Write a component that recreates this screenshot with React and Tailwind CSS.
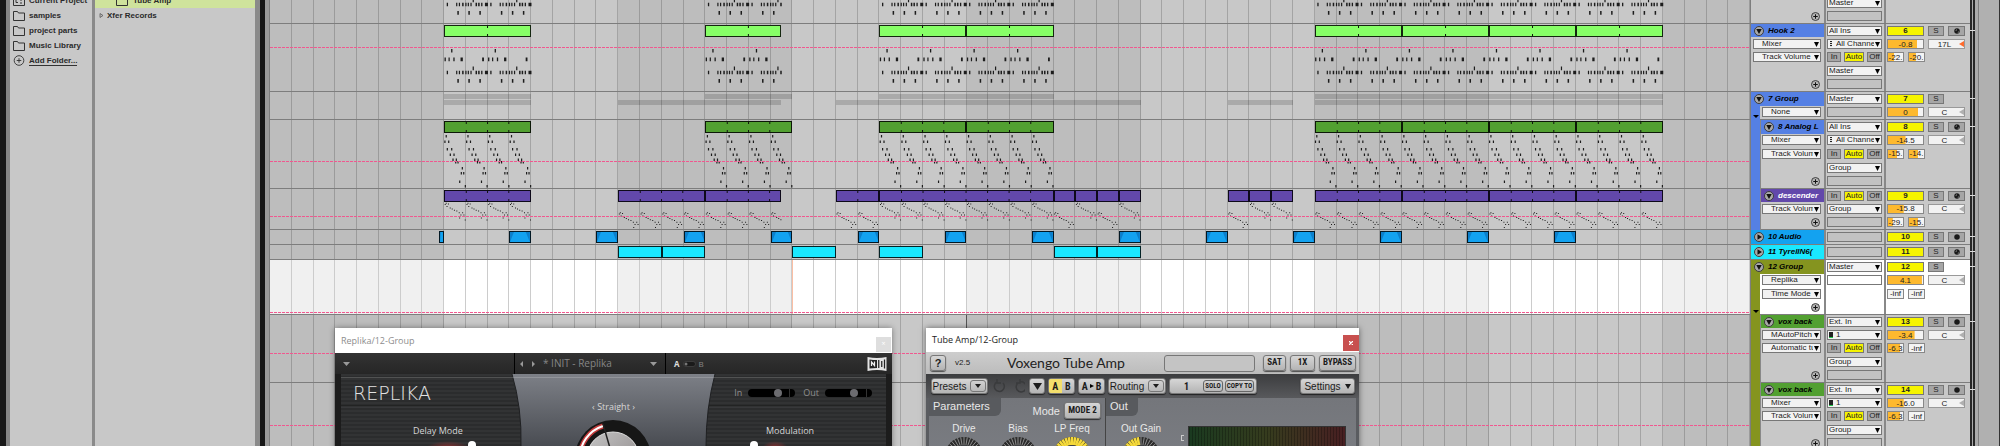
import React from 'react';

/* ---------- arrangement data (positions in bars, bar 0 = first clip) ---------- */
const FIRST_BAR = -8;
const BARS = 68;
const BAR_W = 21.75;
const hookClips = [[0, 4], [12, 15.5], [20, 24], [24, 28], [40, 44], [44, 48], [48, 52], [52, 56]];
const analogClips = [[0, 4], [12, 16], [20, 24], [24, 28], [40, 44], [44, 48], [48, 52], [52, 56]];
const descClips = [[0, 4], [8, 12], [12, 15.5], [18, 20], [20, 28], [28, 29], [29, 30], [30, 31], [31, 32], [36, 37], [37, 38], [38, 39], [40, 44], [44, 48], [48, 52], [52, 56]];
const audioClips = [[-0.25, 0], [3, 4], [7, 8], [11, 12], [15, 16], [19, 20], [23, 24], [27, 28], [31, 32], [35, 36], [39, 40], [43, 44], [47, 48], [51, 52]];
const tyrellClips = [[8, 10], [10, 12], [16, 18], [20, 22], [28, 30], [30, 32]];

/* note patterns: [x, y, w, h] inside one loop */
const hookNotes = [
  [7, 25, 1.3],
  [0.4, 33.5, 1.3], [4.4, 33.5, 1.2], [9.2, 33.5, 1.3], [16.4, 33.5, 2.3], [38, 33.5, 1.8],
  [28.5, 42.5, 1.2],
  [2.6, 46.6, 1.3], [12, 46.6, 1.2], [14.7, 46.6, 1.2], [18, 46.6, 1.5], [21.2, 46.6, 1.2], [23.6, 46.6, 1.2], [26.3, 46.6, 1.2],
  [31.4, 46.6, 1.5], [34, 46.6, 1.5], [37, 46.6, 1.3], [40.8, 46.6, 3],
  [13.2, 55, 1.5], [24.2, 55, 1.5], [35.2, 55, 1.5],
].map(([x, y, w]) => [x, y, w, 3.6]);
const analogNotes = [
  [1.5, 15], [0.2, 20.5], [4, 20.5], [2.6, 28], [7, 28], [5.6, 33.5], [9.3, 33.5], [8.3, 38.5], [11.6, 38.5],
  [11, 41], [13.3, 41], [17.6, 47], [16.6, 52], [19, 52], [15, 60.5], [20.6, 65],
].map(([x, y]) => [x, y, 1.2, 2.4]);
const descNotes = [
  [0.6, 15], [1.6, 13.8], [3.8, 14.6], [5.6, 18.5], [7.6, 19.6], [2.4, 17], [9.8, 20.8], [12.2, 21.6], [14.6, 23.3], [16.3, 25.5],
  [18, 23.3], [19.3, 25.5], [15, 28.5], [20.6, 30.5],
].map(([x, y]) => [x, y, 1, 1]);

const isHigh = (b) => b < 4 || (b >= 20 && b < 28) || [29, 31, 37, 38].includes(b);

function buildNotes(clips, pattern, loopBars, shift) {
  const out = [];
  clips.forEach(([s, e]) => {
    for (let b = s; b < e; b += loopBars) {
      pattern.forEach(([x, y, w, h]) => {
        const px = (b - FIRST_BAR) * BAR_W + x;
        if (px < (e - FIRST_BAR) * BAR_W - 0.5) out.push([px, y + (shift ? shift(b) : 0), w, h]);
      });
    }
  });
  return out;
}
const hookSet = buildNotes(hookClips, hookNotes, 2);
const analogSet = buildNotes(analogClips, analogNotes, 1);
const descSet = buildNotes(descClips, descNotes, 1, (b) => (isHigh(b) ? 0 : 9.5));

/* ---------- tracks ---------- */
const TRACKS = [
  { id: 5, h: 'h-[68px]', rows: 'grid-rows-5', color: 'bg-[#5580e4]', name: '', chain: [], addRow: 5, io: [null, null, null, 'Master', ''], mix: null, clips: [], notes: hookSet },
  { id: 6, h: 'h-[68px]', rows: 'grid-rows-5', color: 'bg-[#5580e4]', name: 'Hook 2', chain: ['Mixer', 'Track Volume'], addRow: 5, io: ['All Ins', ':All Channels', '#', 'Master', ''], mix: { vol: '-0.8', fill: 83, pan: '17L', off: true, rec: 'midi', peaks: [['-22.', 40], ['-20.', 46]] }, clips: hookClips, clip: 'bg-[#87ff67]', tick: 2, notes: hookSet, auto: 34 },
  { id: 7, h: 'h-[28px]', rows: 'grid-rows-2', color: 'bg-[#5580e4]', name: '7 Group', group: 'bg-[#5580e4]', head: true, chain: ['None'], io: ['Master', ''], mix: { vol: '0', fill: 86, pan: 'C' }, summary: true },
  { id: 8, h: 'h-[69px]', rows: 'grid-rows-5', color: 'bg-[#5580e4]', name: '8 Analog L', group: 'bg-[#5580e4]', chain: ['Mixer', 'Track Volume'], addRow: 5, io: ['All Ins', ':All Channels', '#', 'Group', ''], mix: { vol: '-14.5', fill: 50, pan: 'C', rec: 'midi', peaks: [['-15.', 60], ['-14.', 62]] }, clips: analogClips, clip: 'bg-[#52a031]', tick: 1, notes: analogSet, auto: 60 },
  { id: 9, h: 'h-[41px]', rows: 'grid-rows-3', color: 'bg-[#6248ab]', light: true, name: 'descender', group: 'bg-[#5580e4]', chain: ['Track Volume'], addRow: 3, io: ['#', 'Group', ''], mix: { vol: '-15.8', fill: 45, pan: 'C', rec: 'midi', peaks: [['-29.', 32], ['-15.', 60]] }, clips: descClips, clip: 'bg-[#6248ab]', tick: 1, notes: descSet, auto: 67 },
  { id: 10, h: 'h-[15px]', rows: 'grid-rows-1', color: 'bg-[#13a2f0]', name: '10 Audio', folded: true, chain: [], io: [''], mix: { rec: 'audio' }, clips: audioClips, clip: 'bg-[#13a2f0]', fades: true },
  { id: 11, h: 'h-[15px]', rows: 'grid-rows-1', color: 'bg-[#1ae8ff]', name: '11 TyrellN6(', folded: true, chain: [], io: [''], mix: { rec: 'midi' }, clips: tyrellClips, clip: 'bg-[#1ae8ff]' },
  { id: 12, h: 'h-[55px]', rows: 'grid-rows-4', color: 'bg-[#85941f]', name: '12 Group', group: 'bg-[#85941f]', head: true, selected: true, chain: ['Replika', 'Time Mode'], addRow: 4, io: ['Master', ''], mix: { vol: '4.1', fill: 97, pan: 'C', peaks: [['-inf', 0], ['-inf', 0]] }, auto: 97 },
  { id: 13, h: 'h-[68px]', rows: 'grid-rows-5', color: 'bg-[#52a031]', name: 'vox back', group: 'bg-[#85941f]', chain: ['MAutoPitch', 'Automatic tuning'], addRow: 5, io: ['Ext. In', '|1', '#', 'Group', ''], mix: { vol: '-3.4', fill: 76, pan: 'C', rec: 'audio', peaks: [['-6.3', 80], ['-inf', 0]] }, auto: 56 },
  { id: 14, h: 'h-[68px]', rows: 'grid-rows-5', color: 'bg-[#52a031]', name: 'vox back', group: 'bg-[#85941f]', chain: ['Mixer', 'Track Volume'], addRow: 5, io: ['Ext. In', '|1', '#', 'Group', ''], mix: { vol: '-16.0', fill: 45, pan: 'C', rec: 'audio', peaks: [['-6.3', 80], ['-inf', 0]] }, auto: 62 },
];

const ROW_START = ['', 'row-start-1', 'row-start-2', 'row-start-3', 'row-start-4', 'row-start-5'];

/* ---------- arrangement lane ---------- */
function BarGrid({ selected }) {
  return (
    <div className="absolute inset-0 flex">
      {Array.from({ length: BARS }, (_, i) => {
        const dark = Math.floor(i / 8) % 2 === 0;
        const tone = selected ? (dark ? 'bg-[#f0f0f0]' : 'bg-white') : dark ? 'bg-[#bdbdbd]' : 'bg-[#c8c8c8]';
        return <div key={i} className={`flex-1 border-r ${selected ? 'border-[#cccccc]' : 'border-black/18'} ${tone}`} />;
      })}
    </div>
  );
}

function Clip({ span: [s, e], tone, tick, fades }) {
  const col = (b) => Math.round((b - FIRST_BAR) * 4) + 1;
  const ticks = [];
  if (tick) for (let b = tick; b < e - s; b += tick) ticks.push((b / (e - s)) * 100);
  return (
    <div className={`relative row-start-1 h-3 border border-black/85 ${tone}`} style={{ gridColumn: `${col(s)} / ${col(e)}` }}>
      <svg className="absolute inset-0 h-full w-full" viewBox="0 0 100 10" preserveAspectRatio="none" aria-hidden="true">
        {fades && <path d="M0 0H20L0 10ZM80 0H100V10Z" fill="#0c7fcb" />}
        {ticks.map((t) => (
          <path key={t} d={`M${t} 0V2M${t} 8V10`} stroke="#111" strokeWidth="1" vectorEffect="non-scaling-stroke" />
        ))}
      </svg>
    </div>
  );
}

const clipGrid = 'relative grid grid-cols-[repeat(272,minmax(0,1fr))]';

function SummaryBars({ spans }) {
  const col = (b) => Math.round((b - FIRST_BAR) * 4) + 1;
  return (
    <div className={clipGrid}>
      {spans.map(([s, e]) => (
        <div key={s} className="row-start-1 h-[5px] bg-black/15" style={{ gridColumn: `${col(s)} / ${col(e)}` }} />
      ))}
    </div>
  );
}

function Lane({ t }) {
  return (
    <div className="relative min-w-0 flex-1 overflow-hidden">
      <BarGrid selected={t.selected} />
      {t.summary && (
        <div className="flex flex-col gap-px pt-0.5">
          <SummaryBars spans={[[0, 4], [12, 16], [20, 28], [40, 56]]} />
          <SummaryBars spans={[[0, 4], [8, 15.5], [18, 32], [36, 39], [40, 56]]} />
        </div>
      )}
      {t.clips && (
        <div className={`${clipGrid} pt-px`}>
          {t.clips.map((c, i) => (
            <Clip key={i} span={c} tone={t.clip} tick={t.tick} fades={t.fades} />
          ))}
        </div>
      )}
      {t.notes && (
        <svg className="absolute inset-0 h-full w-full" viewBox="0 0 1479 68" preserveAspectRatio="xMinYMin slice" aria-hidden="true">
          <path d={t.notes.map(([x, y, w, h]) => `M${x} ${y}h${w}v${h}h-${w}z`).join('')} fill="#1c1c1c" />
        </svg>
      )}
      {t.selected && <div className="absolute inset-y-0 left-[35.3%] w-px bg-[#fbbfa4]" />}
      {t.id === 13 && <div className="absolute inset-y-0 left-[47.06%] w-px bg-[#555]" />}
      {t.auto !== undefined && (
        <div
          className="absolute inset-x-0 h-px bg-[repeating-linear-gradient(90deg,#f0588f_0_3px,transparent_3px_4px)]"
          style={{ top: `${t.auto}%` }}
        />
      )}
    </div>
  );
}

/* ---------- track header controls ---------- */
function Arrow({ className = '' }) {
  return (
    <svg viewBox="0 0 10 9" preserveAspectRatio="none" className={`pointer-events-none ${className}`} aria-hidden="true">
      <path d="M0 0H10L5 9Z" fill="currentColor" />
    </svg>
  );
}

function Picker({ value, label, indent }) {
  let text = value;
  let mark = null;
  if (value[0] === ':') {
    text = value.slice(1);
    mark = 'dots';
  } else if (value[0] === '|') {
    text = value.slice(1);
    mark = 'meter';
  }
  const pad = indent || mark === 'dots' ? 'pl-2' : mark ? 'pl-2' : 'pl-px';
  return (
    <div className="relative h-[10px] w-full border border-[#777] bg-[#f2f2f2]">
      <select aria-label={label} className={`block h-2 w-full appearance-none overflow-hidden bg-transparent text-[8px] leading-[8px] text-[#222] ${pad} pr-[7px]`}>
        <option>{text}</option>
      </select>
      {mark === 'dots' && <div className="absolute top-px left-0.5 h-1.5 w-0.5 bg-[repeating-linear-gradient(#222_0_1px,#ddd_1px_2px)]" />}
      {mark === 'meter' && <div className="absolute top-px left-px h-1.5 w-1 border-b border-[#1ecb4b] bg-[#222]" />}
      <Arrow className="absolute top-0.5 right-px h-[5px] w-[5px] text-black" />
    </div>
  );
}

function Monitor() {
  const base = 'h-[10px] border border-[#777] text-[8px] leading-[8px] text-[#222]';
  return (
    <div className="flex w-full justify-between">
      <button type="button" className={`${base} w-[14px] bg-[#a6a6a6]`}>In</button>
      <button type="button" className={`${base} w-5 bg-[#f6f400]`}>Auto</button>
      <button type="button" className={`${base} w-[15px] bg-[#a6a6a6]`}>Off</button>
    </div>
  );
}

function ValueBox({ value, fill, label, width }) {
  return (
    <input
      aria-label={label}
      defaultValue={value}
      className={`h-[10px] ${width} border border-[#888] bg-[#f4f4f4] bg-[linear-gradient(#fdb92e,#fdb92e)] bg-no-repeat p-0 text-center text-[8px] leading-[8px] text-[#222]`}
      style={{ backgroundSize: `${fill}% 100%` }}
    />
  );
}

function FoldIcon({ folded }) {
  return (
    <svg viewBox="0 0 20 20" className="h-[10px] w-[10px] shrink-0" aria-hidden="true">
      <circle cx="10" cy="10" r="9" fill="#a9a9a9" stroke="#3c3c3c" strokeWidth="2" />
      {folded ? <path d="M7 4.500L16 10L7 15.500Z" fill="#111" /> : <path d="M4.500 6H15.500L10 16Z" fill="#111" />}
    </svg>
  );
}

function RecIcon({ kind }) {
  return (
    <svg viewBox="0 0 12 12" className="h-[6px] w-[6px]" aria-hidden="true">
      <circle cx="6" cy="6" r="5.500" fill="#1a1a1a" />
      {kind === 'midi' && <path d="M2.500 5.500L5.500 2V5ZM7 9.500L9.500 6V9Z" fill="#a6a6a6" />}
    </svg>
  );
}

function AddButton() {
  return (
    <button type="button" aria-label="Add automation lane" className="mr-[3px] ml-auto block">
      <svg viewBox="0 0 18 18" className="h-[9px] w-[9px]" aria-hidden="true">
        <circle cx="9" cy="9" r="8" fill="#b4b4b4" stroke="#333" strokeWidth="1.800" />
        <path d="M9 4.500V13.500M4.500 9H13.500" stroke="#111" strokeWidth="2" />
      </svg>
    </button>
  );
}

function NameColumn({ t }) {
  const nested = t.group && !t.head;
  return (
    <div className={`flex w-[75px] shrink-0 border-r-2 border-[#888] ${t.selected ? 'bg-white' : 'bg-[#c8c8c8]'}`}>
      {nested && <div className={`-mb-px w-[10px] shrink-0 border-r border-[#888] ${t.group}`} />}
      <div className={`relative grid min-w-0 flex-1 ${t.rows}`}>
        {t.head && (
          <div className={`absolute inset-y-0 -bottom-px left-0 flex w-[9px] items-end justify-center pb-0.5 ${t.group}`}>
            <Arrow className="h-[3px] w-[6px] text-black" />
          </div>
        )}
        <div className={`relative row-start-1 flex min-w-0 items-center gap-1 overflow-hidden pl-[3px] ${t.color}`}>
          {t.name && (
            <>
              <button type="button" aria-label={`Fold ${t.name}`} className="flex">
                <FoldIcon folded={t.folded} />
              </button>
              <span className={`text-[8px] leading-[10px] font-bold whitespace-nowrap italic ${t.light ? 'text-white' : 'text-black'}`}>{t.name}</span>
            </>
          )}
        </div>
        {t.chain.map((c, i) => (
          <div key={i} className={`${ROW_START[i + 2]} flex items-center pr-[3px] ${t.head ? 'pl-[11px]' : nested ? 'pl-px' : 'pl-0.5'}`}>
            <Picker value={c} label={`${t.name} automation ${i + 1}`} indent />
          </div>
        ))}
        {t.addRow && (
          <div className={`${ROW_START[t.addRow]} flex items-center pr-px`}>
            <AddButton />
          </div>
        )}
      </div>
    </div>
  );
}

function IoColumn({ t }) {
  return (
    <div className={`grid w-[60px] shrink-0 border-r-2 border-[#888] pr-0.5 pl-px ${t.rows} ${t.selected ? 'bg-white' : 'bg-[#c8c8c8]'}`}>
      {t.io.map((v, i) => (
        <div key={i} className={`${ROW_START[i + 1]} flex min-w-0 items-center`}>
          {v === '#' ? <Monitor /> : v ? <Picker value={v} label={`Track ${t.id} routing ${i + 1}`} /> : v === '' ? <div className={`h-[10px] w-full border border-[#777] ${t.selected ? 'bg-white' : 'bg-[#c2c2c2]'}`} /> : null}
        </div>
      ))}
    </div>
  );
}

function MixColumn({ t }) {
  const m = t.mix;
  return (
    <div className={`grid min-w-0 flex-1 pl-px ${t.rows} ${t.selected ? 'bg-white' : 'bg-[#c8c8c8]'}`}>
      {m && (
        <div className="row-start-1 flex items-center gap-1">
          <button type="button" className="h-[10px] w-[37px] border border-[#777] bg-[#f6f400] text-[8px] leading-[8px] font-bold text-[#222]">{t.id}</button>
          <button type="button" className="h-[10px] w-4 border border-[#777] bg-[#a6a6a6] text-[8px] leading-[8px] text-[#222]">S</button>
          {m.rec && (
            <button type="button" aria-label={`Arm track ${t.id}`} className="flex h-[10px] w-[17px] items-center justify-center border border-[#777] bg-[#a6a6a6]">
              <RecIcon kind={m.rec} />
            </button>
          )}
        </div>
      )}
      {m && m.vol && (
        <div className="row-start-2 flex items-center gap-1">
          <ValueBox value={m.vol} fill={m.fill} label={`Track ${t.id} volume`} width="w-[37px]" />
          <div className="relative flex">
            <input aria-label={`Track ${t.id} pan`} defaultValue={m.pan} className="h-[10px] w-[37px] border border-[#999] bg-[#f2f2f2] p-0 pr-1 text-center text-[8px] leading-[8px] text-[#222]" />
            <svg viewBox="0 0 6 8" preserveAspectRatio="none" className={`absolute top-0.5 right-px h-1.5 w-[5px] ${m.off ? 'text-[#ff6a2b]' : 'text-[#b0b0b0]'}`} aria-hidden="true">
              <path d="M6 0V8L0 4Z" fill="currentColor" />
            </svg>
          </div>
        </div>
      )}
      {m && m.peaks && (
        <div className="row-start-3 flex items-center gap-1">
          {m.peaks.map(([v, f], i) => (
            <ValueBox key={i} value={v} fill={f} label={`Track ${t.id} level ${i + 1}`} width="w-[17px]" />
          ))}
        </div>
      )}
    </div>
  );
}

function Meters() {
  return (
    <div className="relative -mb-px flex w-2 shrink-0 gap-px bg-[#aaa] pr-[3px]">
      <div className="flex-1 bg-[#262626]" />
      <div className="flex-1 bg-[#262626]" />
      <div className="absolute top-1.5 right-[3px] left-0 h-px bg-[#ddd]" />
    </div>
  );
}

function Track({ t }) {
  return (
    <div className={`flex ${t.h} shrink-0 border-b border-[#7d7d7d]`}>
      <Lane t={t} />
      <div className="flex w-[229px] shrink-0 border-r border-l border-[#7d7d7d]">
        <NameColumn t={t} />
        <IoColumn t={t} />
        <MixColumn t={t} />
        <Meters />
      </div>
    </div>
  );
}

/* ---------- browser ---------- */
function FolderIcon() {
  return (
    <svg viewBox="0 0 24 20" className="h-[10px] w-3" fill="none" stroke="#333" strokeWidth="2" aria-hidden="true">
      <path d="M1 19V1H9L11 4H23V19Z" />
    </svg>
  );
}

function Browser() {
  const item = 'flex h-[15px] items-center gap-1 pl-[3px] whitespace-nowrap';
  return (
    <div className="flex w-[270px] shrink-0 border-r border-[#808080] text-[8px] font-bold text-[#2a2a2a]">
      <div className="w-1.5 bg-[#181818]" />
      <div className="w-1 bg-[#868686]" />
      <nav aria-label="Places" className="-mt-[7px] flex w-[82px] flex-col bg-[#c8c8c8]">
        <a href="#current" className={item}>
          <svg viewBox="0 0 24 20" className="h-[10px] w-3" fill="none" stroke="#333" strokeWidth="2" aria-hidden="true">
            <path d="M1 1H23V19H1ZM6 7V13H10M14 8H18M14 14H18" />
          </svg>
          Current Project
        </a>
        {['samples', 'project parts', 'Music Library'].map((f) => (
          <a key={f} href="#folder" className={item}><FolderIcon />{f}</a>
        ))}
        <a href="#add" className={item}>
          <svg viewBox="0 0 24 24" className="h-[11px] w-3" fill="none" stroke="#333" strokeWidth="2" aria-hidden="true">
            <circle cx="12" cy="12" r="10.500" />
            <path d="M12 7V17M7 12H17" />
          </svg>
          <span className="border-b border-[#333] leading-[9px]">Add Folder...</span>
        </a>
      </nav>
      <div className="w-[3px] bg-[#8a8a8a]" />
      <div className="-mt-[7px] flex w-40 flex-col bg-[#c8c8c8]">
        <div className="flex h-[15px] items-center gap-[5px] bg-[#cfe39c] pl-[21px]"><FolderIcon />Tube Amp</div>
        <div className="flex h-[15px] items-center gap-[3px] pl-1">
          <svg viewBox="0 0 8 10" className="h-[5px] w-[5px]" fill="#bbb" stroke="#555" strokeWidth="1.500" aria-hidden="true"><path d="M1 1L7 5L1 9Z" /></svg>
          Xfer Records
        </div>
      </div>
      <div className="w-[5px] bg-[#8a8a8a]" />
      <div className="w-[5px] bg-[#181818]" />
      <div className="flex-1 bg-[#9c9c9c]" />
    </div>
  );
}

/* ---------- Replika plug-in window ---------- */
function MiniSlider({ label, value }) {
  return (
    <label className="flex items-center gap-1.5 text-[9px] text-[#8f8f8f]">
      {label}
      <span className="relative flex h-2 w-[47px] overflow-hidden rounded-full bg-black">
        <input type="range" aria-label={label} defaultValue={value} className="absolute inset-0 w-full opacity-0" />
        <span className="absolute top-0 h-2 w-2 rounded-full bg-[#6c6c70]" style={{ left: `${value}%` }} />
        <span className="absolute top-0 right-[5px] h-2 w-px bg-[#333]" />
      </span>
    </label>
  );
}

function ReplikaWindow() {
  return (
    <section aria-label="Replika" className="absolute top-[328px] left-[335px] flex h-[240px] w-[557px] flex-col bg-[#1c1c1c] font-['Open_Sans','Noto_Sans',sans-serif] shadow-[0_0_6px_rgba(0,0,0,0.4)]">
      <header className="flex h-[25px] shrink-0 items-center justify-between bg-white pl-1.5 text-[9px] text-[#8d8d8d]">
        Replika/12-Group
        <button type="button" aria-label="Close Replika" className="mt-2 mr-px h-[15px] w-[15px] bg-[#dedede] text-[7px] text-white">×</button>
      </header>
      <div className="flex h-[21px] shrink-0 items-center bg-linear-to-b from-[#333] to-[#262626] text-[10px] text-[#868686]">
        <div className="flex h-full w-[180px] items-center border-r border-black pl-2">
          <Arrow className="h-1 w-[7px] text-[#999]" />
        </div>
        <div className="flex h-full w-[151px] items-center border-r border-black pr-2 pl-[5px]">
          <svg viewBox="0 0 15 6" className="h-1.5 w-[15px]" fill="#999" aria-hidden="true"><path d="M3 0V6L0 3ZM12 0V6L15 3Z" /></svg>
          <span className="flex-1 pl-2 whitespace-nowrap">* INIT - Replika</span>
          <Arrow className="h-1 w-[7px] text-[#999]" />
        </div>
        <div className="flex flex-1 items-center gap-[3px] pr-[5px] pl-2 text-[8px]">
          <b className="text-[#ddd]">A</b>
          <svg viewBox="0 0 26 12" className="h-1.5 w-[13px]" aria-hidden="true"><rect x="1" y="1" width="24" height="10" rx="5" fill="#1a1a1a" stroke="#555" /><circle cx="6" cy="6" r="3" fill="#777" /></svg>
          B
          <svg viewBox="0 0 40 28" className="ml-auto h-[14px] w-5" aria-hidden="true">
            <path d="M1 0Q20 4 39 0V28Q20 24 1 28Z" fill="#e4e4e4" />
            <path d="M5 5Q12 6 20 6V22Q12 22 5 23Z" fill="#222" />
            <path d="M9 18V10L15 17V9" stroke="#eee" strokeWidth="2.500" fill="none" />
            <path d="M23.500 6V22M35 5V23M29.500 8V20" stroke="#222" strokeWidth="2.500" fill="none" />
          </svg>
        </div>
      </div>
      <div className="relative mx-1.5 flex-1 overflow-hidden bg-[repeating-linear-gradient(#323334_0_2px,#2b2c2d_2px_4px)]">
        <svg viewBox="0 0 545 72" className="absolute top-0 left-0 h-[72px] w-full" aria-hidden="true">
          <defs>
            <linearGradient id="shield" x1="0" x2="0" y1="0" y2="1"><stop offset="0" stopColor="#7d8087" /><stop offset="1" stopColor="#494c52" /></linearGradient>
            <linearGradient id="cap" x1="0" x2="1" y1="0" y2="1"><stop offset="0" stopColor="#c4c4c4" /><stop offset="1" stopColor="#8a8485" /></linearGradient>
            <radialGradient id="glow"><stop offset="0" stopColor="#a33" stopOpacity=".8" /><stop offset="1" stopColor="#a33" stopOpacity="0" /></radialGradient>
          </defs>
          <path d="M0 32H545" stroke="#1a1a1a" />
          <path d="M0 33H545" stroke="#3d3f40" />
          <path d="M171 0Q181 34 180 72H365Q365 34 374 0Z" fill="url(#shield)" />
          <path d="M171 0Q181 34 180 72M374 0Q365 34 365 72" stroke="#1f2022" fill="none" />
          <path d="M0 3.500H545" stroke="#fff" strokeOpacity=".18" />
          <ellipse cx="107" cy="74" rx="22" ry="7" fill="url(#glow)" />
          <ellipse cx="434" cy="74" rx="13" ry="7" fill="url(#glow)" />
          <circle cx="272" cy="84" r="38" fill="#161616" />
          <path d="M239 84A33 33 0 0 1 262 52" stroke="#c23b3b" strokeWidth="5" fill="none" />
          <path d="M239 84A33 33 0 0 1 262 52" stroke="#fff" strokeWidth="2" fill="none" />
          <circle cx="272" cy="84" r="26" fill="url(#cap)" stroke="#ddd" />
          <path d="M262 50L269 74" stroke="#222" strokeWidth="1.500" />
          <circle cx="131" cy="71" r="4" fill="#fff" />
          <circle cx="413" cy="71" r="4" fill="#fff" />
        </svg>
        <div className="relative grid grid-cols-[180px_1fr_180px] text-[9px] text-[#d6d6d6]">
          <div className="flex flex-col pl-3">
            <h2 className="pt-2 font-['DejaVu_Sans_Light','DejaVu_Sans',sans-serif] text-[19px] leading-[22px] font-extralight text-[#e2e2e2]">REPLIKA</h2>
            <p className="pt-5 pl-[60px] leading-[14px]">Delay Mode</p>
          </div>
          <p className="pt-[26px] text-center leading-[14px]">‹ Straight ›</p>
          <div className="flex flex-col">
            <div className="flex justify-end gap-2 pt-3 pr-[14px]">
              <MiniSlider label="In" value={54} />
              <MiniSlider label="Out" value={54} />
            </div>
            <p className="pt-6 pr-3 text-center leading-[14px]">Modulation</p>
          </div>
        </div>
      </div>
    </section>
  );
}

/* ---------- Tube Amp plug-in window ---------- */
const key = 'flex shrink-0 items-center justify-center rounded-[3px] border border-[#777] bg-linear-to-b from-[#d6d6d6] to-[#b4b4b4] text-[#1c1c1c] shadow-[0_1px_1px_rgba(0,0,0,0.6)] whitespace-nowrap';
const narrow = "font-['Liberation_Sans_Narrow','Roboto_Condensed','Liberation_Sans',sans-serif] font-bold";

function DialKnob({ label, lit, width }) {
  return (
    <div className={`flex flex-col items-center ${width}`}>
      <span className="leading-[14px] whitespace-nowrap">{label}</span>
      <svg viewBox="0 0 40 40" className="h-10 w-10" aria-hidden="true">
        <circle cx="20" cy="20" r="19" fill="#2b2b2b" />
        {Array.from({ length: 36 }, (_, i) => {
          const deg = i * 10 - 180;
          const a = (deg * Math.PI) / 180;
          return (
            <path
              key={i}
              d={`M${20 + 11 * Math.sin(a)} ${20 - 11 * Math.cos(a)}L${20 + 19 * Math.sin(a)} ${20 - 19 * Math.cos(a)}`}
              stroke={deg < lit ? '#f5d93a' : '#8c8c8c'}
              strokeWidth={deg < lit ? 2.6 : 1}
            />
          );
        })}
        <circle cx="20" cy="20" r="11" fill="#44464a" />
      </svg>
    </div>
  );
}

function TubeAmpWindow() {
  return (
    <section aria-label="Tube Amp" className="absolute top-[328px] left-[926px] flex h-[240px] w-[433px] flex-col bg-[#505256] shadow-[0_0_6px_rgba(0,0,0,0.5)]">
      <header className="flex h-6 shrink-0 items-center justify-between bg-white pl-1.5 font-['Open_Sans','Noto_Sans',sans-serif] text-[9px] text-[#222]">
        Tube Amp/12-Group
        <button type="button" aria-label="Close Tube Amp" className="mt-1.5 flex h-4 w-4 items-center justify-center bg-[#c8504f]">
          <svg viewBox="0 0 8 8" className="h-1 w-1" stroke="#fff" strokeWidth="2.500" aria-hidden="true"><path d="M0 0L8 8M8 0L0 8" /></svg>
        </button>
      </header>
      <div className="flex h-[22px] shrink-0 items-center bg-linear-to-b from-[#cdcdcd] to-[#bcbcbc] pr-[3px] pl-1">
        <button type="button" className={`${key} h-4 w-4 text-[11px] font-bold`}>?</button>
        <span className="w-[61px] pl-[9px] text-[8px] text-[#222]">v2.5</span>
        <h2 className="w-[157px] font-['Lato',sans-serif] text-[14px] leading-5 whitespace-nowrap text-[#222]">Voxengo Tube Amp</h2>
        <input aria-label="Hint" className="h-[17px] w-[91px] rounded-[3px] border border-[#777] bg-[#c4c4c4]" />
        <div className={`flex flex-1 justify-end gap-1 ${narrow} text-[9px]`}>
          <button type="button" className={`${key} h-4 w-[23px]`}>SAT</button>
          <button type="button" className={`${key} h-4 w-[25px]`}>1X</button>
          <button type="button" className={`${key} h-4 w-[37px]`}>BYPASS</button>
        </div>
      </div>
      <div className="flex h-6 shrink-0 items-center gap-[3px] bg-linear-to-b from-[#3c3d3f] to-[#58595c] pr-1 pl-[5px] text-[10px]">
        <button type="button" className={`${key} h-4 w-[57px] gap-1`}>
          Presets
          <span className="flex h-3 w-4 items-center justify-center rounded-[3px] border border-[#777]"><Arrow className="h-1 w-1.5" /></span>
        </button>
        <svg viewBox="0 0 34 14" className="mr-px h-[14px] w-[34px]" fill="none" stroke="#3a3b3d" strokeWidth="1.500" aria-hidden="true">
          <path d="M6 3A5 5 0 1 0 12 4M6 0V4H10M27 4A5 5 0 1 0 29 3M29 0V4H25" />
        </svg>
        <button type="button" aria-label="Menu" className={`${key} h-4 w-4`}><Arrow className="h-[7px] w-[9px]" /></button>
        <div className={`${key} h-4 w-[27px] overflow-hidden ${narrow}`}>
          <button type="button" className="h-full flex-1 bg-[#f4df6c]">A</button>
          <button type="button" className="h-full flex-1">B</button>
        </div>
        <button type="button" className={`${key} h-4 w-[27px] gap-0.5 ${narrow}`}>
          A
          <svg viewBox="0 0 4 4" className="h-1 w-1" aria-hidden="true"><path d="M0 0L4 2L0 4Z" /></svg>
          B
        </button>
        <button type="button" className={`${key} h-4 w-[58px] gap-1`}>
          Routing
          <span className="flex h-3 w-4 items-center justify-center rounded-[3px] border border-[#777]"><Arrow className="h-1 w-1.5" /></span>
        </button>
        <div className={`${key} h-4 w-[88px] ${narrow} text-[7px]`}>
          <span className="flex-1 text-center text-[10px]">1</span>
          <button type="button" className="h-3 w-5 rounded-[3px] border border-[#666] leading-[10px]">SOLO</button>
          <button type="button" className="mr-0.5 ml-0.5 h-3 w-[29px] rounded-[3px] border border-[#666] leading-[10px]">COPY TO</button>
        </div>
        <button type="button" className={`${key} ml-auto h-4 w-[55px] gap-1`}>
          Settings
          <Arrow className="h-[5px] w-1.5" />
        </button>
      </div>
      <div className="flex flex-1 bg-[#5a5c60] px-[3px] text-[10px] text-[#e8e8e8]">
        <div className="w-[177px] border-r border-[#444] bg-linear-to-b from-[#74767b] to-[#85888e]">
          <div className="flex h-6 items-start">
            <span className="h-[18px] w-[72px] rounded-br-md bg-[#585a5e] pl-1 text-[11px] leading-[17px]">Parameters</span>
            <span className="flex-1 pr-1 text-right text-[11px] leading-[26px]">Mode</span>
            <button type="button" className={`${key} mt-1 mr-1 h-[17px] w-[37px] text-[9px] ${narrow}`}>MODE 2</button>
          </div>
          <div className="flex pl-2">
            <DialKnob label="Drive" lit={-400} width="w-[54px]" />
            <DialKnob label="Bias" lit={-400} width="w-[54px]" />
            <DialKnob label="LP Freq" lit={130} width="w-[54px]" />
          </div>
        </div>
        <div className="flex flex-1 bg-linear-to-b from-[#74767b] to-[#85888e]">
          <div className="w-[75px]">
            <div className="h-6">
              <span className="block h-[18px] w-8 rounded-br-md bg-[#585a5e] pl-1 text-[11px] leading-[17px]">Out</span>
            </div>
            <div className="pl-2"><DialKnob label="Out Gain" lit={0} width="w-[54px]" /></div>
          </div>
          <div className="mt-[37px] w-[7px]">
            <div className="h-1.5 w-[3px] border border-r-0 border-[#ccc]" />
          </div>
          <div className="mt-7 mr-2.5 flex-1 border border-[#333] bg-[repeating-linear-gradient(90deg,rgba(0,0,0,0.25)_0_1px,transparent_1px_3px),linear-gradient(90deg,#1a3a20,#363c1e,#481f22)]" />
        </div>
      </div>
    </section>
  );
}

export default function App() {
  return (
    <main className="relative flex h-screen w-full overflow-hidden bg-[#b0b0b0] font-['Liberation_Sans',Arial,sans-serif]">
      <Browser />
      <div className="-mt-[44px] flex min-w-0 flex-1 flex-col">
        {TRACKS.map((t) => (
          <Track key={t.id} t={t} />
        ))}
      </div>
      <div className="w-[21px] border-r border-[#333] bg-[#b0b0b0]" />
      <ReplikaWindow />
      <TubeAmpWindow />
    </main>
  );
}
